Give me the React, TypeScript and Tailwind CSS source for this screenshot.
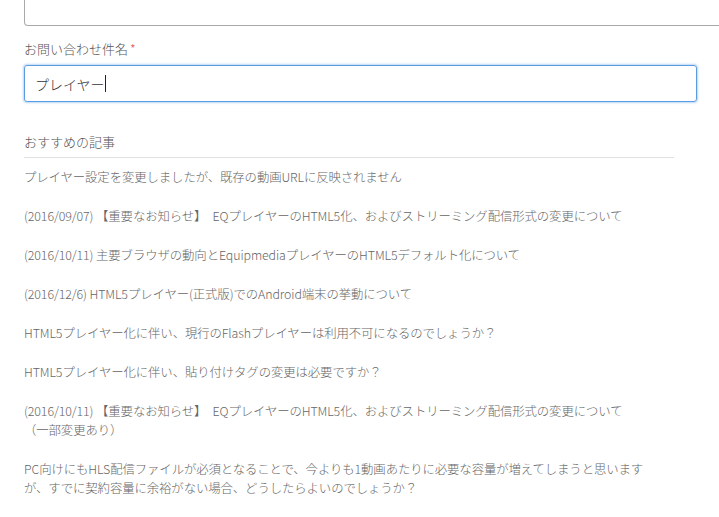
import React from "react";

const font = { fontFamily: '"Noto Sans CJK JP", "Noto Sans", sans-serif' };

const items: string[][] = [
  ["プレイヤー設定を変更しましたが、既存の動画URLに反映されません"],
  ["(2016/09/07) 【重要なお知らせ】　EQプレイヤーのHTML5化、およびストリーミング配信形式の変更について"],
  ["(2016/10/11) 主要ブラウザの動向とEquipmediaプレイヤーのHTML5デフォルト化について"],
  ["(2016/12/6) HTML5プレイヤー(正式版)でのAndroid端末の挙動について"],
  ["HTML5プレイヤー化に伴い、現行のFlashプレイヤーは利用不可になるのでしょうか？"],
  ["HTML5プレイヤー化に伴い、貼り付けタグの変更は必要ですか？"],
  [
    "(2016/10/11) 【重要なお知らせ】　EQプレイヤーのHTML5化、およびストリーミング配信形式の変更について",
    "（一部変更あり）",
  ],
  [
    "PC向けにもHLS配信ファイルが必須となることで、今よりも1動画あたりに必要な容量が増えてしまうと思います",
    "が、すでに契約容量に余裕がない場合、どうしたらよいのでしょうか？",
  ],
];

export default function App() {
  return (
    <div
      className="w-[719px] h-[517px] overflow-hidden bg-white pl-[24px]"
      style={font}
    >
      <div className="h-[26px] w-[720px] border-x border-b border-[#a9a9a9] rounded-b-[4px]" />
      <div className="mt-[13px] text-[13px] leading-[19px] font-light text-[#555]">
        お問い合わせ件名<span className="text-[#e05050] ml-[2px]">*</span>
      </div>
      <div className="mt-[7px] h-[37px] w-[673px] rounded-[3px] border border-[#5b9be0] shadow-[0_0_2px_1px_rgba(100,160,230,0.45)] flex items-center px-[10px]">
        <span className="text-[14px] text-[#333] leading-[20px] font-light">プレイヤー</span>
        <span className="w-px h-[17px] bg-[#222]" />
      </div>
      <div className="mt-[30px] w-[650px] border-b border-[#e0e0e0] pb-[6px] text-[13px] leading-[19px] font-light text-[#555]">
        おすすめの記事
      </div>
      <div className="mt-[10px] flex flex-col gap-[20px] text-[12.4px] leading-[19px] font-light text-[#666] tracking-[-0.1px]">
        {items.map((lines, i) => (
          <div key={i} className="whitespace-nowrap">
            {lines.map((l, j) => (
              <div key={j}>{l}</div>
            ))}
          </div>
        ))}
      </div>
    </div>
  );
}
